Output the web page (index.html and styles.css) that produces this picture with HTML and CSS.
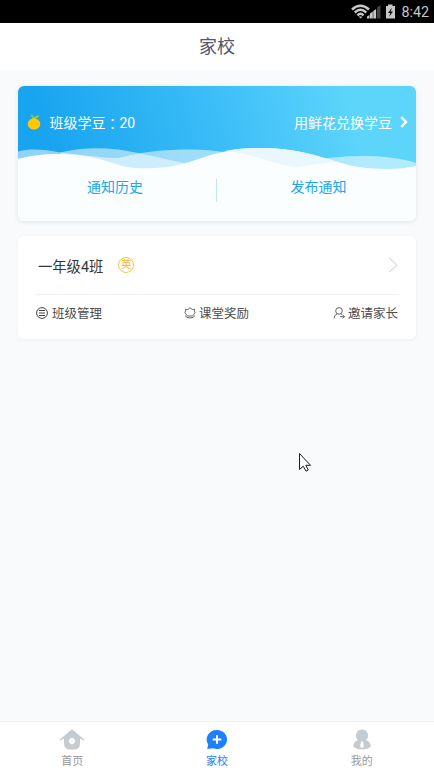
FILE: index.html
```html
<!DOCTYPE html>
<html lang="zh-CN">
<head>
<meta charset="utf-8">
<title>家校</title>
<link rel="stylesheet" href="styles.css">
</head>
<body>
<div class="status">
  <svg class="status-icons" width="46" height="18" viewBox="0 0 46 18">
    <g fill="none" stroke="#c8c8c8" stroke-width="2.500">
      <path d="M1 6.500Q9.500-1 18 6.500"/><path d="M3.800 9.500Q9.500 4 15.200 9.500"/><path d="M6.500 12.500Q9.500 9 12.500 12.500"/>
    </g>
    <path d="M7.500 13.500h4l-2 2z" fill="#c8c8c8"/>
    <path d="M16 15.500v-2l2.500-1.500v3.500zM19 15.500v-5l2.800-2v7zM22.300 15.500V8l2.800-2v9.500z" fill="#c8c8c8"/>
    <path d="M26 15.500V4.500L29.500 2v13.500z" fill="#444"/>
    <path d="M35 3h2V1.500h4.500V3H44v12.500H35z" fill="#c8c8c8"/>
    <path d="M41 4.500L37 10h2.300l-1.300 4 4-5.500h-2.300z" fill="#111"/>
  </svg>
  <span class="clock">8:42</span>
</div>
<header class="title">家校</header>
<main>
  <section class="card hero">
    <svg class="waves" viewBox="0 0 398 136" width="398" height="136">
      <defs>
        <linearGradient id="sky" gradientUnits="userSpaceOnUse" x1="35" y1="75" x2="325" y2="-10">
          <stop offset="0" stop-color="#18a4ef"/><stop offset=".55" stop-color="#3bbdf7"/><stop offset="1" stop-color="#5dd5fb"/>
        </linearGradient>
      </defs>
      <path fill="url(#sky)" d="M0 0H398V100H0z"/>
      <path fill="#fff" fill-opacity=".52" d="M0 65.500C14 62 28 64 42 66.500C60 62 80 61 100 63.500C118 66 137 70.500 152 74C175 79 190 83 220 84V100H0z"/>
      <path fill="#fff" fill-opacity=".52" d="M42 66.500C80 71 90 72 100 72C125 66 140 64 168 63.500C198 63 220 68 240 73L280 85H42z"/>
      <path fill="#fff" fill-opacity=".52" d="M240 84C278 76 315 69 350 70C372 70.500 386 73 398 77V100H240z"/>
      <path fill="#fafeff" d="M0 73C10 70 24 68 40 68C65 68 79 72 95 77C109 82 121 83 137 82C175 81 190 63 237 62C291 61 315 78 345 81.500C366 84 385 83 398 80V136H0z"/>
      <path fill="#e9f7ff" d="M207 65C217 63 227 62 237 62C276 61 300 70 320 76C300 77 290 80 278 81C255 78 240 70 225 68C219 66 213 65.500 207 65z"/>
    </svg>
    <div class="hero-body">
      <div class="beans">
        <svg width="14" height="16" viewBox="0 0 14 16"><ellipse cx="7" cy="10" rx="6.300" ry="5.700" fill="#ffc800"/><path d="M3 7l4-4 4 4z" fill="#ffc800"/><path d="M7 4Q4 4 3.600.5Q7 .6 7 4Q8 1 12.500 1.300Q11.500 5 7 4z" fill="#8bc832"/></svg>
        <span class="bean-count">班级学豆<span lang="zh-TW" class="colon">：</span>20</span>
        <span class="exchange">用鲜花兑换学豆</span>
        <svg class="go" width="8" height="12" viewBox="0 0 8 12"><path d="M1.300 1.200L6 6 1.300 10.800" fill="none" stroke="#fff" stroke-width="2.400"/></svg>
      </div>
      <div class="notices"><span>通知历史</span><i class="divider"></i><span>发布通知</span></div>
    </div>
  </section>
  <section class="card classroom">
    <div class="class-head">
      <span class="class-name">一年级4班</span><span class="subject">英</span>
      <svg class="more" width="10" height="16" viewBox="0 0 10 16"><path d="M1.500 1l7.500 7-7.500 7" fill="none" stroke="#dce1e5" stroke-width="1.500"/></svg>
    </div>
    <div class="actions">
      <span class="action"><svg width="12" height="12" viewBox="0 0 12 12" fill="none" stroke="#444" stroke-width="1"><circle cx="6" cy="6" r="5.400"/><path d="M3 3.500h6M3 6h6M3 8.500h6"/></svg>班级管理</span>
      <span class="action reward"><svg width="12" height="12" viewBox="0 0 12 12" fill="none" stroke="#555" stroke-width=".9"><path d="M3.500 2.500Q5 2.200 6 .6Q7 2.200 8.500 2.500L10.500 2.200Q10 4 11 5.500Q10 7.300 8.500 9H3.500Q2 7.300 1 5.500Q2 4 1.500 2.200zM1 8.700q1.500 2.200 5 2.300Q9.500 10.900 11 8.700"/></svg>课堂奖励</span>
      <span class="action invite"><svg width="12" height="12" viewBox="0 0 12 12" fill="none" stroke="#555" stroke-width=".9"><circle cx="6" cy="3.900" r="3.300"/><path d="M1 11.500Q1 8 4.200 6.800M7.500 6.700l1.200 1M7 9.700h4.500M9.500 8l2 1.700-2 1.500"/></svg>邀请家长</span>
    </div>
  </section>
</main>
<nav class="tabs">
  <a class="tab"><svg width="26" height="22" viewBox="0 0 26 22"><path fill="#c4ccd1" fill-rule="evenodd" d="M13 .3L25.500 10.800 24.500 11.500 21 9.500V14.500q0 6-6 6h-4q-6 0-6-6V9.500L1.500 11.500 .5 10.800zM13 8.800a3.200 3.200 0 1 0 .01 0z"/></svg>首页</a>
  <a class="tab active"><svg width="22" height="22" viewBox="0 0 22 22"><path fill="#1e80ff" d="M11 1a10 9.500 0 1 1-4 18.200L1.200 20 2.200 15.500A10 9.500 0 0 1 11 1z"/><path d="M11 6.200v8.600M6.700 10.500h8.600" stroke="#fff" stroke-width="2"/></svg>家校</a>
  <a class="tab"><svg width="20" height="22" viewBox="0 0 20 22"><path fill="#c4ccd1" d="M10 .5a6 6 0 0 1 4 10.500q5 2 4.700 6.500Q16 20.500 10 20.500T1.300 17.500Q1 13 6 11A6 6 0 0 1 10 .5z"/><path fill="#fff" d="M9 12.500h2l.8 5L10 19.300 8.200 17.500z"/></svg>我的</a>
</nav>
<svg class="cursor" width="13" height="20" viewBox="0 0 13 20"><path d="M.5.500v16l3.800-3.300 2.700 5 2.300-1.200-2.500-4.700H11.500z" fill="#fff" stroke="#1b1b2b"/></svg>
</body>
</html>
```

FILE: styles.css
```css
* { box-sizing: border-box; }
body {
  margin: 0;
  height: 772px;
  display: flex;
  flex-direction: column;
  background: #f8fafc;
  font-family: Roboto, "Noto Sans CJK SC", sans-serif;
  overflow: hidden;
}
svg { display: block; flex: none; }
span { white-space: nowrap; }
.status {
  height: 23px;
  background: #000;
  display: flex;
  align-items: center;
  justify-content: flex-end;
  padding-right: 5px;
  gap: 4px;
  color: #c8c8c8;
  font-size: 14.3px;
}
.title {
  height: 47px;
  background: #fff;
  color: #515669;
  font-size: 18px;
  line-height: 48px;
  text-align: center;
}
main { flex: 1; padding: 16px 18px; }
.card { border-radius: 6px; box-shadow: 0 1px 4px rgba(70, 110, 120, .15); }
.hero { height: 135px; display: grid; overflow: hidden; }
.waves, .hero-body { grid-area: 1 / 1; }
.hero-body { z-index: 1; }
.beans {
  height: 72px;
  padding: 0 8px 0 9px;
  display: flex;
  align-items: center;
  color: #fff;
  font-size: 14px;
}
.colon { font-family: "Noto Sans CJK TC", sans-serif; line-height: 1; vertical-align: -1px; }
.bean-count { margin-left: 8.500px; }
.exchange { margin-left: auto; }
.go { margin-left: 8px; }
.notices {
  display: grid;
  grid-template-columns: 198px 1px 1fr;
  height: 60px;
  align-items: center;
  color: #20a5ed;
  font-size: 14px;
  text-align: center;
}
.notices span { padding-bottom: 4px; }
.notices span:first-child { padding-right: 4px; }
.notices span:last-child { padding-left: 4px; }
.divider { height: 23px; background: #c2e6f0; margin-top: 4px; }
.classroom { height: 103px; margin-top: 15px; padding: 0 18px; background: #fff; box-shadow: 0 1px 4px rgba(70, 110, 120, .06); }
.class-head {
  height: 59px;
  border-bottom: 1px solid #eff1f2;
  display: flex;
  align-items: center;
  padding-left: 2px;
}
.class-name { color: #333640; font-size: 14.3px; }
.subject {
  margin-left: 15px;
  width: 16px;
  height: 16px;
  border: 1px solid #fac34b;
  border-radius: 50%;
  color: #f7b52d;
  font-size: 10px;
  line-height: 14px;
  text-align: center;
}
.more { margin-left: auto; }
.actions {
  height: 35px;
  display: flex;
  align-items: center;
  justify-content: space-between;
  color: #4c4c4c;
  font-size: 12.5px;
}
.action { display: flex; align-items: center; gap: 4px; }
.reward, .invite { gap: 3px; }
.reward { margin-right: 2px; }
.tabs {
  height: 51px;
  background: #fff;
  border-top: 1px solid #eff1f2;
  display: grid;
  grid-template-columns: repeat(3, 1fr);
}
.tab {
  display: flex;
  flex-direction: column;
  align-items: center;
  padding-top: 7px;
  color: #999;
  font-size: 11px;
  line-height: 22px;
}
.active { color: #1e80ff; }
.cursor { position: absolute; left: 299px; top: 453px; }
```
